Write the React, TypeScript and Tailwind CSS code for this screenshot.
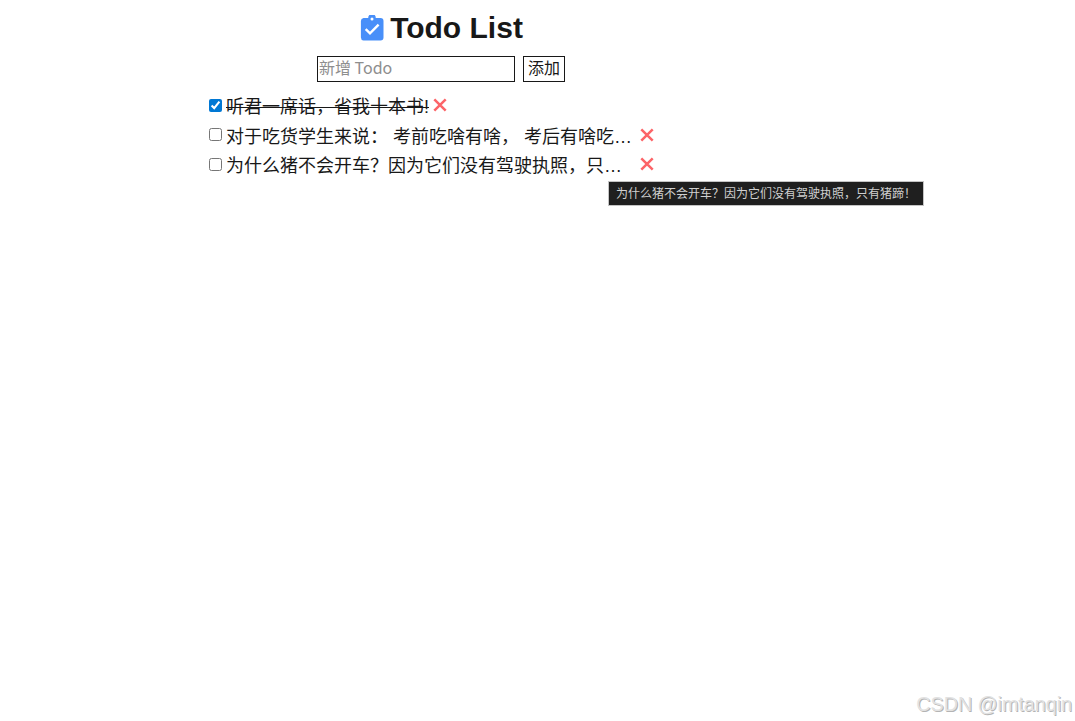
import { useState } from 'react';

interface ITodo {
  id: number;
  text: string;
  done: boolean;
}

const initialTodos: ITodo[] = [
  { id: 1, text: '听君一席话，省我十本书!', done: true },
  { id: 2, text: '对于吃货学生来说： 考前吃啥有啥， 考后有啥吃啥！', done: false },
  { id: 3, text: '为什么猪不会开车？因为它们没有驾驶执照，只有猪蹄！', done: false },
];

const ClipboardIcon = () => (
  <svg className="mr-[5px] ml-px h-[26px] w-[24px]" viewBox="0 0 24 26">
    <path
      fill="#488ff9"
      d="M3.5 3H8.2A3.8 3.8 0 0 1 15.8 3H20.5A3 3 0 0 1 23.5 6V22.5A3 3 0 0 1 20.5 25.5H3.5A3 3 0 0 1 .9 22.5V6A3 3 0 0 1 3.5 3Z"
    />
    <circle cx="12" cy="4" r="1.5" fill="white" />
    <path d="M5.7 14.2L10 18.4L18.6 9.7" fill="none" stroke="white" strokeWidth="2.4" />
  </svg>
);

const RemoveIcon = () => (
  <svg className="h-[14px] w-[14px]" viewBox="0 0 14 14">
    <path d="M1.3 1.3L12.7 12.7M12.7 1.3L1.3 12.7" stroke="#fc6468" strokeWidth="2.5" />
  </svg>
);

const App: React.FC = () => {
  const [todos, setTodos] = useState(initialTodos);
  const [value, setValue] = useState('');

  const addTodo = () => {
    if (!value.trim()) return;
    setTodos([...todos, { id: Date.now(), text: value, done: false }]);
    setValue('');
  };

  const toggleTodo = (id: number) => {
    setTodos(todos.map((todo) => (todo.id === id ? { ...todo, done: !todo.done } : todo)));
  };

  return (
    <div className="relative h-screen overflow-hidden bg-white font-['Noto_Sans_CJK_SC',sans-serif] text-[#181818]">
      <main className="ml-[209px] w-[464px] pt-2">
        <h1 className="flex h-10 items-center justify-center font-['Liberation_Sans',sans-serif] text-[30px] font-bold">
          <ClipboardIcon />
          <span className="pb-[2px] pl-px">Todo List</span>
        </h1>
        <div className="mt-2 flex justify-center gap-2">
          <input
            className="h-[26px] w-[198px] border border-[#181818] px-px pb-[5px] text-base outline-none placeholder:text-[#8e8e8e]"
            placeholder="新增 Todo"
            value={value}
            onChange={(e) => setValue(e.target.value)}
          />
          <button
            className="h-[26px] w-[42px] border border-[#181818] pb-[3px] text-base leading-[21px]"
            onClick={addTodo}
          >
            添加
          </button>
        </div>
        <ul className="mt-[8.5px] font-['Liberation_Sans','Noto_Sans_CJK_SC',sans-serif]">
          {todos.map((todo) => (
            <li key={todo.id} className="flex h-[29.5px] items-center text-lg">
              <input
                type="checkbox"
                className="mr-1 h-[13px] w-[13px] shrink-0 accent-[#0078d4]"
                checked={todo.done}
                onChange={() => toggleTodo(todo.id)}
              />
              <span className={todo.done ? 'pt-[3px] line-through' : 'w-[410px] truncate pt-1'}>
                {todo.text}
              </span>
              <button
                className="ml-1 shrink-0"
                onClick={() => setTodos(todos.filter((item) => item.id !== todo.id))}
              >
                <RemoveIcon />
              </button>
            </li>
          ))}
        </ul>
      </main>
      <div
        role="tooltip"
        className="absolute top-[181px] left-[608px] h-[25px] w-[316px] border border-[#c4c4c4] bg-[#1f1f1f] pl-[7px] text-xs leading-[22px] whitespace-nowrap text-[#d0d0d0]"
      >
        为什么猪不会开车？因为它们没有驾驶执照，只有猪蹄！
      </div>
      <div className="absolute right-[3px] bottom-[3px] font-['Liberation_Sans',sans-serif] text-[19.7px] leading-7 text-[#e2e2e2] [text-shadow:1px_1px_0_#b4b4b4]">
        CSDN @imtanqin
      </div>
    </div>
  );
};

export default App;
